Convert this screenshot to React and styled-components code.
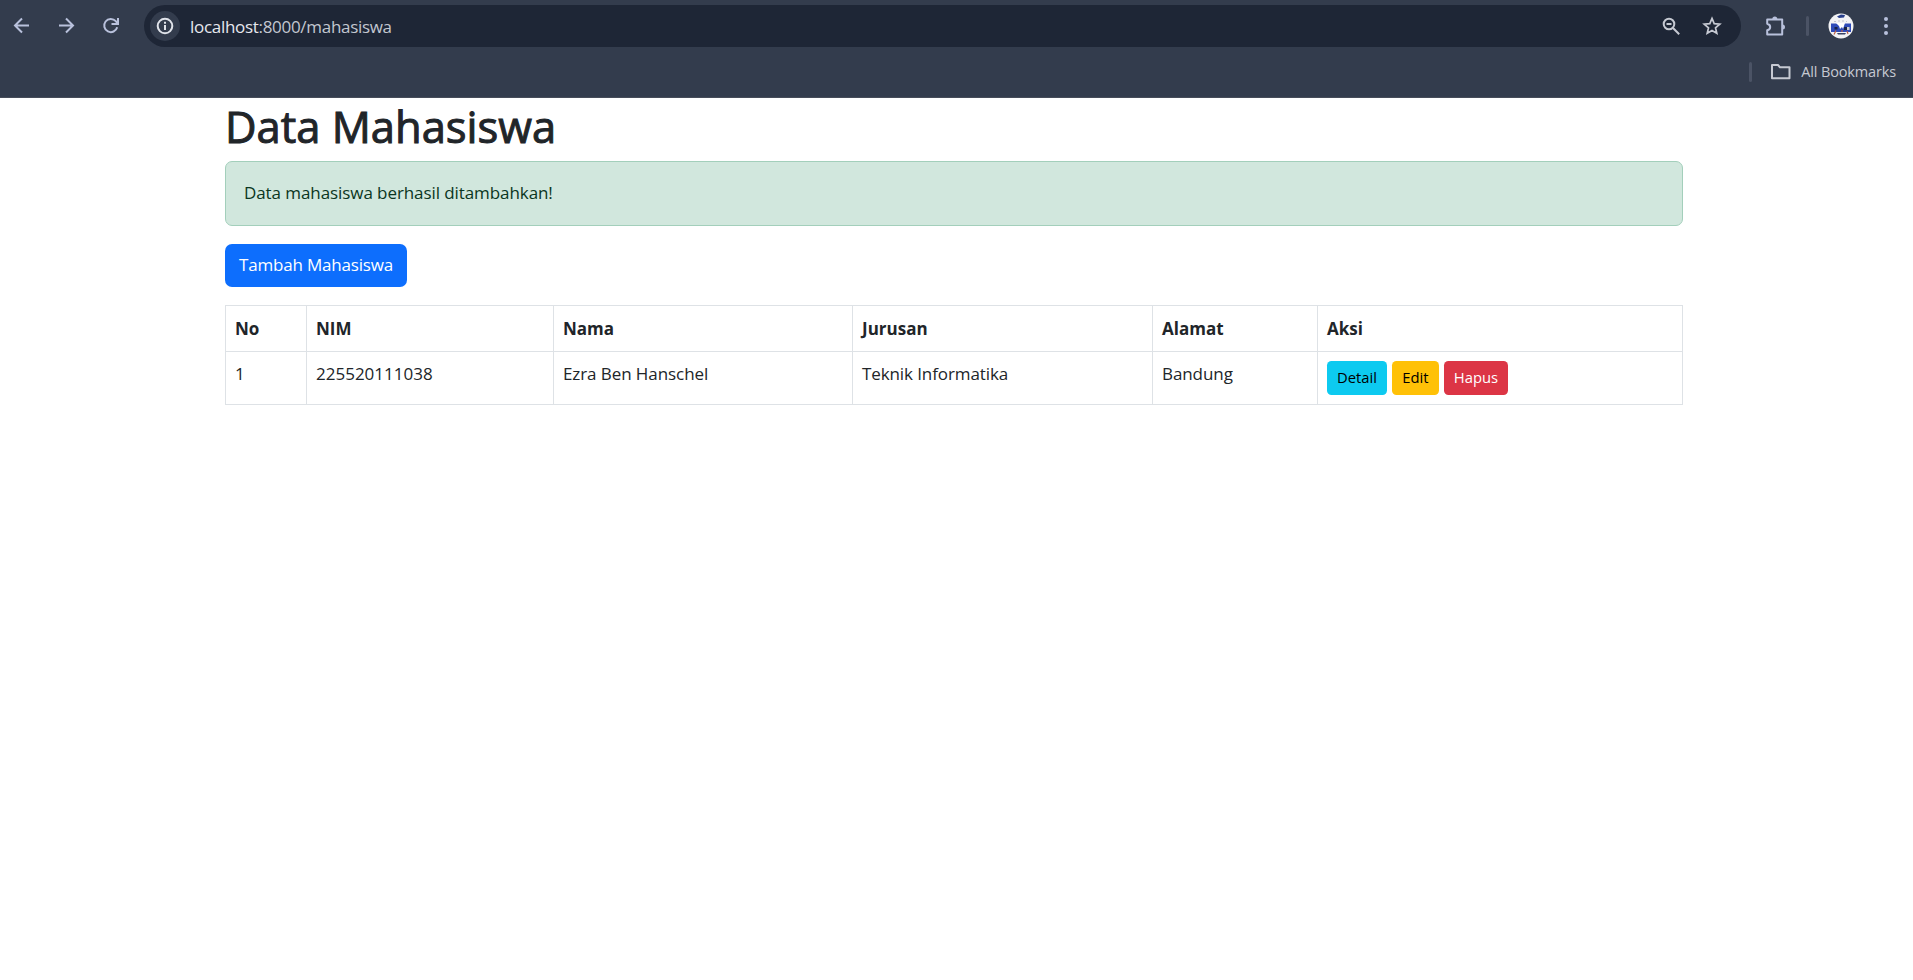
import React from "react";
import styled, { createGlobalStyle } from "styled-components";

const GlobalStyle = createGlobalStyle`
  *, *::before, *::after { box-sizing: border-box; }
  body {
    margin: 0;
    background: #fff;
    color: #212529;
    font-family: "Open Sans", "Noto Sans", sans-serif;
    font-size: 17px;
    line-height: 27px;
  }
`;

const Window = styled.div`
  display: flex;
  flex-direction: column;
  height: 980px;
  overflow: hidden;
`;

const Chrome = styled.header`
  height: 98px;
  background: #333c4d;
  border-bottom: 1px solid #474d5a;
  color: #b9c1dc;
`;

const Toolbar = styled.div`
  display: flex;
  align-items: center;
  height: 52px;
`;

const ToolIcon = styled.svg`
  display: block;
  flex: none;
  width: 24px;
  height: 24px;
  margin-left: ${(p) => p.$gap || 0}px;
  margin-right: ${(p) => p.$end || 0}px;
  fill: none;
  stroke: ${(p) => p.$color || "#b9c1dc"};
  stroke-width: 2;
`;

const Omnibox = styled.div`
  display: flex;
  align-items: center;
  width: 1597px;
  height: 42px;
  margin-left: 21px;
  padding-left: 6px;
  border-radius: 21px;
  background: #1e2636;
`;

const SiteInfo = styled.span`
  display: flex;
  align-items: center;
  justify-content: center;
  width: 30px;
  height: 30px;
  border-radius: 50%;
  background: #333c4d;
`;

const Url = styled.span`
  flex: 1;
  margin-left: 10px;
  color: #c3c7d0;
  font-size: 17px;
  letter-spacing: ${(p) => p.$track}px;
`;

const Host = styled.span`
  color: #e6e8ee;
`;

const Divider = styled.span`
  flex: none;
  width: 3px;
  height: 20px;
  margin-left: ${(p) => p.$gap}px;
  border-radius: 2px;
  background: #4b5365;
`;

const Avatar = styled.svg`
  display: block;
  flex: none;
  width: 26px;
  height: 26px;
  margin-left: 19px;
`;

const BookmarksBar = styled.div`
  display: flex;
  align-items: center;
  justify-content: flex-end;
  height: 40px;
  padding-right: 17px;
`;

const BookmarkLabel = styled.span`
  margin-left: 8px;
  padding-bottom: 2px;
  color: #c6c9d2;
  font-size: 14.5px;
  letter-spacing: ${(p) => p.$track}px;
`;

const Container = styled.main`
  width: 1458px;
  margin-left: 225px;
`;

const Title = styled.h1`
  margin: 2px 0 7px;
  font-size: 43.5px;
  font-weight: 500;
  line-height: 54px;
  -webkit-text-stroke: 1px #212529;
`;

const Alert = styled.div`
  height: 65px;
  padding: 17px 18px;
  border: 1px solid #a3cfbb;
  border-radius: 7px;
  background: #d1e7dd;
  color: #0a3622;
  letter-spacing: ${(p) => p.$track}px;
`;

const AddButton = styled.button`
  display: block;
  width: 182px;
  height: 43px;
  margin: 18px 0;
  padding: 0 0 2px;
  border: 0;
  border-radius: 7px;
  background: #0d6efd;
  color: #fff;
  font: inherit;
  letter-spacing: ${(p) => p.$track}px;
`;

const Table = styled.table`
  width: 1457px;
  border-collapse: collapse;
  table-layout: fixed;
`;

const Cell = styled.td`
  height: ${(p) => p.$h}px;
  padding: ${(p) => p.$top || 9}px 9px 0 9px;
  border: 1px solid #dee2e6;
  text-align: left;
  vertical-align: top;
  font-weight: ${(p) => (p.$head ? 700 : 400)};
  letter-spacing: ${(p) => p.$track || 0}px;
`;

const Actions = styled.div`
  display: flex;
  gap: 5px;
`;

const tones = {
  info: ["#0dcaf0", "#000"],
  warning: ["#ffc107", "#000"],
  danger: ["#dc3545", "#fff"],
};

const SmallButton = styled.button`
  width: ${(p) => p.$w}px;
  height: 34px;
  padding: 0 0 2px;
  border: 0;
  border-radius: 4.5px;
  background: ${(p) => tones[p.$tone][0]};
  color: ${(p) => tones[p.$tone][1]};
  font: inherit;
  font-size: 14.8px;
  line-height: 24px;
`;

const columns = [
  { label: "No", width: 81 },
  { label: "NIM", width: 247 },
  { label: "Nama", width: 299 },
  { label: "Jurusan", width: 300 },
  { label: "Alamat", width: 165 },
  { label: "Aksi", width: 365 },
];

const student = [
  { value: "1", track: 0 },
  { value: "225520111038", track: 0 },
  { value: "Ezra Ben Hanschel", track: -0.08 },
  { value: "Teknik Informatika", track: -0.1 },
  { value: "Bandung", track: -0.08 },
];

function BrowserChrome() {
  return (
    <Chrome>
      <Toolbar>
        <ToolIcon viewBox="0 0 24 24" $gap={10}>
          <path d="M19 11.5H5M12 4.5l-7 7 7 7" />
        </ToolIcon>
        <ToolIcon viewBox="0 0 24 24" $gap={20}>
          <path d="M5 11.5h14M12 4.5l7 7-7 7" />
        </ToolIcon>
        <ToolIcon viewBox="0 0 24 24" $gap={21}>
          <path d="M18.2 13.2A6.6 6.6 0 1 1 16.8 7.2L18.6 9M19 4v6h-6.5" />
        </ToolIcon>
        <Omnibox>
          <SiteInfo>
            <ToolIcon viewBox="0 0 24 24" $color="#e0e3ea">
              <circle cx="12" cy="12" r="7.3" />
              <path d="M12 11v5M12 7.7v2" />
            </ToolIcon>
          </SiteInfo>
          <Url $track={-0.3}>
            <Host>localhost</Host>:8000/mahasiswa
          </Url>
          <ToolIcon viewBox="0 0 24 24" $color="#c6c9d2">
            <circle cx="10" cy="10" r="5.3" />
            <path d="M14 14l6.2 6.2M7.5 10h5" />
          </ToolIcon>
          <ToolIcon viewBox="0 0 24 24" $gap={17} $end={17} $color="#c6c9d2">
            <path d="M12 4.4l2.2 5.2 5.6.5-4.3 3.7 1.3 5.5-4.8-2.9-4.8 2.9 1.3-5.5-4.3-3.7 5.6-.5z" strokeWidth="1.7" />
          </ToolIcon>
        </Omnibox>
        <ToolIcon viewBox="0 0 24 24" $gap={22}>
          <path d="M4.2 5.5h15v15h-15v-4.2q3-.8 3-3.3t-3-3.3z" strokeLinejoin="round" />
          <path d="M9.3 5a2.5 2.5 0 0 1 5 0zM19.5 10.5a2.5 2.5 0 0 1 0 5z" fill="#b9c1dc" stroke="none" />
        </ToolIcon>
        <Divider $gap={19} />
        <Avatar viewBox="0 0 26 26">
          <clipPath id="face"><circle cx="13" cy="13" r="12.5" /></clipPath>
          <g clipPath="url(#face)">
            <rect width="26" height="26" fill="#f3f3f5" />
            <path d="M9 3.500l4-2 4 .5-1 2.500-5 .5z" fill="#283f8c" />
            <path d="M6 8.500h2M10 8h2M14 8h2M18 8.500h1" stroke="#c3c4cc" />
            <path d="M3 10.500h20v8.500H3z" fill="#2f4bb8" />
            <path d="M8 10l3 3 1 3 2-2 1 2 2-6z" fill="#fff" />
            <path d="M6.500 14h3v2.500h-3zM16 14h3v3h-3z" fill="#182247" />
            <path d="M19 14h2.500v3H19z" fill="#c9ccd0" />
            <path d="M6 21.500l2-4M19 18l1 3M14 17v2" stroke="#bd6044" strokeWidth="1.200" />
            <path d="M9 20h9l-1 1.500h-7z" fill="#394265" />
          </g>
        </Avatar>
        <ToolIcon viewBox="0 0 24 24" $gap={20}>
          <g fill="#b9c1dc" stroke="none">
            <circle cx="12" cy="5" r="2" />
            <circle cx="12" cy="12" r="2" />
            <circle cx="12" cy="19" r="2" />
          </g>
        </ToolIcon>
      </Toolbar>
      <BookmarksBar>
        <Divider $gap={0} />
        <ToolIcon viewBox="0 0 24 24" $gap={17} $color="#c6c9d2">
          <path d="M3 5h6l2 2.3h9.5v11H3z" strokeLinejoin="round" />
        </ToolIcon>
        <BookmarkLabel $track={-0.15}>All Bookmarks</BookmarkLabel>
      </BookmarksBar>
    </Chrome>
  );
}

export default function App() {
  return (
    <Window>
      <GlobalStyle />
      <BrowserChrome />
      <Container>
        <Title>Data Mahasiswa</Title>
        <Alert $track={-0.08}>Data mahasiswa berhasil ditambahkan!</Alert>
        <AddButton $track={-0.19}>Tambah Mahasiswa</AddButton>
        <Table>
          <colgroup>
            {columns.map((c) => (
              <col key={c.label} width={c.width} />
            ))}
          </colgroup>
          <thead>
            <tr>
              {columns.map((c) => (
                <Cell as="th" key={c.label} $head $h={46}>
                  {c.label}
                </Cell>
              ))}
            </tr>
          </thead>
          <tbody>
            <tr>
              {student.map((s) => (
                <Cell key={s.value} $h={53} $top={8} $track={s.track}>
                  {s.value}
                </Cell>
              ))}
              <Cell $h={53}>
                <Actions>
                  <SmallButton $tone="info" $w={60}>Detail</SmallButton>
                  <SmallButton $tone="warning" $w={47}>Edit</SmallButton>
                  <SmallButton $tone="danger" $w={64}>Hapus</SmallButton>
                </Actions>
              </Cell>
            </tr>
          </tbody>
        </Table>
      </Container>
    </Window>
  );
}
